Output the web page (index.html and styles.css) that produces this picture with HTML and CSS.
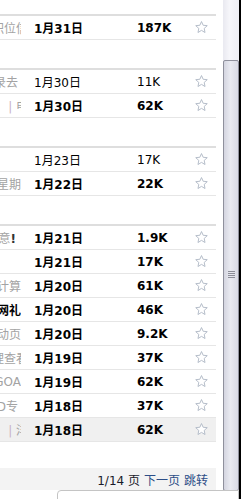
FILE: index.html
```html
<html><head>
<meta charset="UTF-8">
<meta name="viewport" content="width=device-width, initial-scale=1.0">
<title>邮件列表</title>
<link rel="stylesheet" href="styles.css">
</head>
<body>
  <div class="frame">
    <main class="pane">
      <div class="group">
        <div class="row bold">
          <div class="subj"><span class="cut">职位信</span></div>
          <div class="date">1月31日</div>
          <div class="size">187K</div>
          <div class="star"><svg viewBox="0 0 14 14" width="13" height="13"><polygon points="7,0.6 8.8,4.6 13.2,5 9.9,8 10.8,12.4 7,10.1 3.2,12.4 4.1,8 0.8,5 5.2,4.6"/></svg></div>
        </div>
      </div>

      <div class="group">
        <div class="row">
          <div class="subj"><span class="short">记录去</span></div>
          <div class="date">1月30日</div>
          <div class="size">11K</div>
          <div class="star"><svg viewBox="0 0 14 14" width="13" height="13"><polygon points="7,0.6 8.8,4.6 13.2,5 9.9,8 10.8,12.4 7,10.1 3.2,12.4 4.1,8 0.8,5 5.2,4.6"/></svg></div>
        </div>
        <div class="row bold">
          <div class="subj"><span class="cut"><i class="pipe">|</i> 电</span></div>
          <div class="date">1月30日</div>
          <div class="size">62K</div>
          <div class="star"><svg viewBox="0 0 14 14" width="13" height="13"><polygon points="7,0.6 8.8,4.6 13.2,5 9.9,8 10.8,12.4 7,10.1 3.2,12.4 4.1,8 0.8,5 5.2,4.6"/></svg></div>
        </div>
      </div>

      <div class="group">
        <div class="row">
          <div class="subj"></div>
          <div class="date">1月23日</div>
          <div class="size">17K</div>
          <div class="star"><svg viewBox="0 0 14 14" width="13" height="13"><polygon points="7,0.6 8.8,4.6 13.2,5 9.9,8 10.8,12.4 7,10.1 3.2,12.4 4.1,8 0.8,5 5.2,4.6"/></svg></div>
        </div>
        <div class="row bold">
          <div class="subj"><span>下星期</span></div>
          <div class="date">1月22日</div>
          <div class="size">22K</div>
          <div class="star"><svg viewBox="0 0 14 14" width="13" height="13"><polygon points="7,0.6 8.8,4.6 13.2,5 9.9,8 10.8,12.4 7,10.1 3.2,12.4 4.1,8 0.8,5 5.2,4.6"/></svg></div>
        </div>
      </div>

      <div class="group">
        <div class="row bold">
          <div class="subj"><span class="shorter">注意<b class="bang">!</b></span></div>
          <div class="date">1月21日</div>
          <div class="size">1.9K</div>
          <div class="star"><svg viewBox="0 0 14 14" width="13" height="13"><polygon points="7,0.6 8.8,4.6 13.2,5 9.9,8 10.8,12.4 7,10.1 3.2,12.4 4.1,8 0.8,5 5.2,4.6"/></svg></div>
        </div>
        <div class="row bold">
          <div class="subj"></div>
          <div class="date">1月21日</div>
          <div class="size">17K</div>
          <div class="star"><svg viewBox="0 0 14 14" width="13" height="13"><polygon points="7,0.6 8.8,4.6 13.2,5 9.9,8 10.8,12.4 7,10.1 3.2,12.4 4.1,8 0.8,5 5.2,4.6"/></svg></div>
        </div>
        <div class="row bold">
          <div class="subj"><span>云计算</span></div>
          <div class="date">1月20日</div>
          <div class="size">61K</div>
          <div class="star"><svg viewBox="0 0 14 14" width="13" height="13"><polygon points="7,0.6 8.8,4.6 13.2,5 9.9,8 10.8,12.4 7,10.1 3.2,12.4 4.1,8 0.8,5 5.2,4.6"/></svg></div>
        </div>
        <div class="row bold">
          <div class="subj"><span class="dark">上网礼</span></div>
          <div class="date">1月20日</div>
          <div class="size">46K</div>
          <div class="star"><svg viewBox="0 0 14 14" width="13" height="13"><polygon points="7,0.6 8.8,4.6 13.2,5 9.9,8 10.8,12.4 7,10.1 3.2,12.4 4.1,8 0.8,5 5.2,4.6"/></svg></div>
        </div>
        <div class="row bold">
          <div class="subj"><span>活动页</span></div>
          <div class="date">1月20日</div>
          <div class="size">9.2K</div>
          <div class="star"><svg viewBox="0 0 14 14" width="13" height="13"><polygon points="7,0.6 8.8,4.6 13.2,5 9.9,8 10.8,12.4 7,10.1 3.2,12.4 4.1,8 0.8,5 5.2,4.6"/></svg></div>
        </div>
        <div class="row bold">
          <div class="subj"><span class="cut">理查看</span></div>
          <div class="date">1月19日</div>
          <div class="size">37K</div>
          <div class="star"><svg viewBox="0 0 14 14" width="13" height="13"><polygon points="7,0.6 8.8,4.6 13.2,5 9.9,8 10.8,12.4 7,10.1 3.2,12.4 4.1,8 0.8,5 5.2,4.6"/></svg></div>
        </div>
        <div class="row bold">
          <div class="subj"><span>GOA</span></div>
          <div class="date">1月19日</div>
          <div class="size">62K</div>
          <div class="star"><svg viewBox="0 0 14 14" width="13" height="13"><polygon points="7,0.6 8.8,4.6 13.2,5 9.9,8 10.8,12.4 7,10.1 3.2,12.4 4.1,8 0.8,5 5.2,4.6"/></svg></div>
        </div>
        <div class="row bold">
          <div class="subj"><span class="short">D专</span></div>
          <div class="date">1月18日</div>
          <div class="size">37K</div>
          <div class="star"><svg viewBox="0 0 14 14" width="13" height="13"><polygon points="7,0.6 8.8,4.6 13.2,5 9.9,8 10.8,12.4 7,10.1 3.2,12.4 4.1,8 0.8,5 5.2,4.6"/></svg></div>
        </div>
        <div class="row bold selected">
          <div class="subj"><span class="cut"><i class="pipe">|</i> 洋</span></div>
          <div class="date">1月18日</div>
          <div class="size">62K</div>
          <div class="star"><svg viewBox="0 0 14 14" width="13" height="13"><polygon points="7,0.6 8.8,4.6 13.2,5 9.9,8 10.8,12.4 7,10.1 3.2,12.4 4.1,8 0.8,5 5.2,4.6"/></svg></div>
        </div>
      </div>

      <div class="pager">
        <span class="page-num">1/14 页</span>
        <a href="#">下一页</a>
        <a href="#">跳转</a>
      </div>
    </main>

    <div class="scrollbar">
      <div class="thumb"><span class="grip"></span></div>
    </div>
    <div class="edge"></div>
  </div>

  <div class="popup"></div>
</body>
</html>
```

FILE: styles.css
```css
body, html {
  margin: 0;
  padding: 0;
  background-color: #fff;
  font-family: "DejaVu Sans", "Noto Sans CJK SC", sans-serif;
  font-size: 12px;
  overflow: hidden;
}
.frame {
  display: flex;
  height: 499px;
}
.pane {
  width: 216px;
  margin-right: 7px;
  padding-top: 14px;
}
.group {
  border-top: 2px solid #dedede;
  margin-bottom: 28px;
}
.row {
  display: flex;
  align-items: center;
  height: 23px;
  border-bottom: 1px solid #e6e6e6;
  color: #000;
}
.row.bold {
  font-weight: bold;
}
.row.selected {
  background-color: #f0f0f0;
}
.subj {
  width: 21px;
  margin-right: 13px;
  overflow: hidden;
  display: flex;
  justify-content: flex-end;
  white-space: nowrap;
  color: #a3a3a3;
  font-weight: normal;
}
.subj span {
  flex-shrink: 0;
}
.subj .cut {
  margin-right: -7px;
}
.subj .short {
  margin-right: 3px;
}
.subj .shorter {
  margin-right: 5px;
}
.subj .dark {
  color: #000;
  font-weight: bold;
}
.pipe {
  font-style: normal;
  color: #c7b3c4;
}
.bang {
  color: #333;
}
.date {
  width: 103px;
}
.size {
  width: 58px;
}
.star {
  display: flex;
  align-items: center;
}
.star polygon {
  fill: #fff;
  stroke: #b0b9c6;
  stroke-width: 1;
  stroke-linejoin: round;
}
.pager {
  margin-top: -2px;
  height: 22px;
  background-color: #f3f3f3;
  display: flex;
  align-items: center;
  justify-content: flex-end;
  gap: 4px;
  padding-right: 8px;
}
.page-num {
  color: #1a1a2a;
}
.pager a {
  color: #2c4d86;
  text-decoration: none;
}
.scrollbar {
  width: 16px;
  background: linear-gradient(to right, #e9e9f0, #f6f6fa 40%, #eeeef4);
  padding-top: 60px;
  box-sizing: border-box;
}
.thumb {
  height: 431px;
  border: 1px solid #8f909c;
  border-radius: 2px;
  box-sizing: border-box;
  background: linear-gradient(to right, #d4d5e0, #e9eaf1 45%, #d9dae5);
  display: flex;
  align-items: center;
  justify-content: center;
}
.grip {
  width: 7px;
  height: 7px;
  background: repeating-linear-gradient(to bottom, #8c8d98 0, #8c8d98 1px, transparent 1px, transparent 2px);
  margin-top: -2px;
}
.edge {
  width: 2px;
  background-color: #000;
}
.popup {
  position: absolute;
  left: 57px;
  top: 490px;
  width: 180px;
  height: 12px;
  background-color: #fff;
  border: 1px solid #c4c4c4;
  border-radius: 4px 0 0 0;
}
```
